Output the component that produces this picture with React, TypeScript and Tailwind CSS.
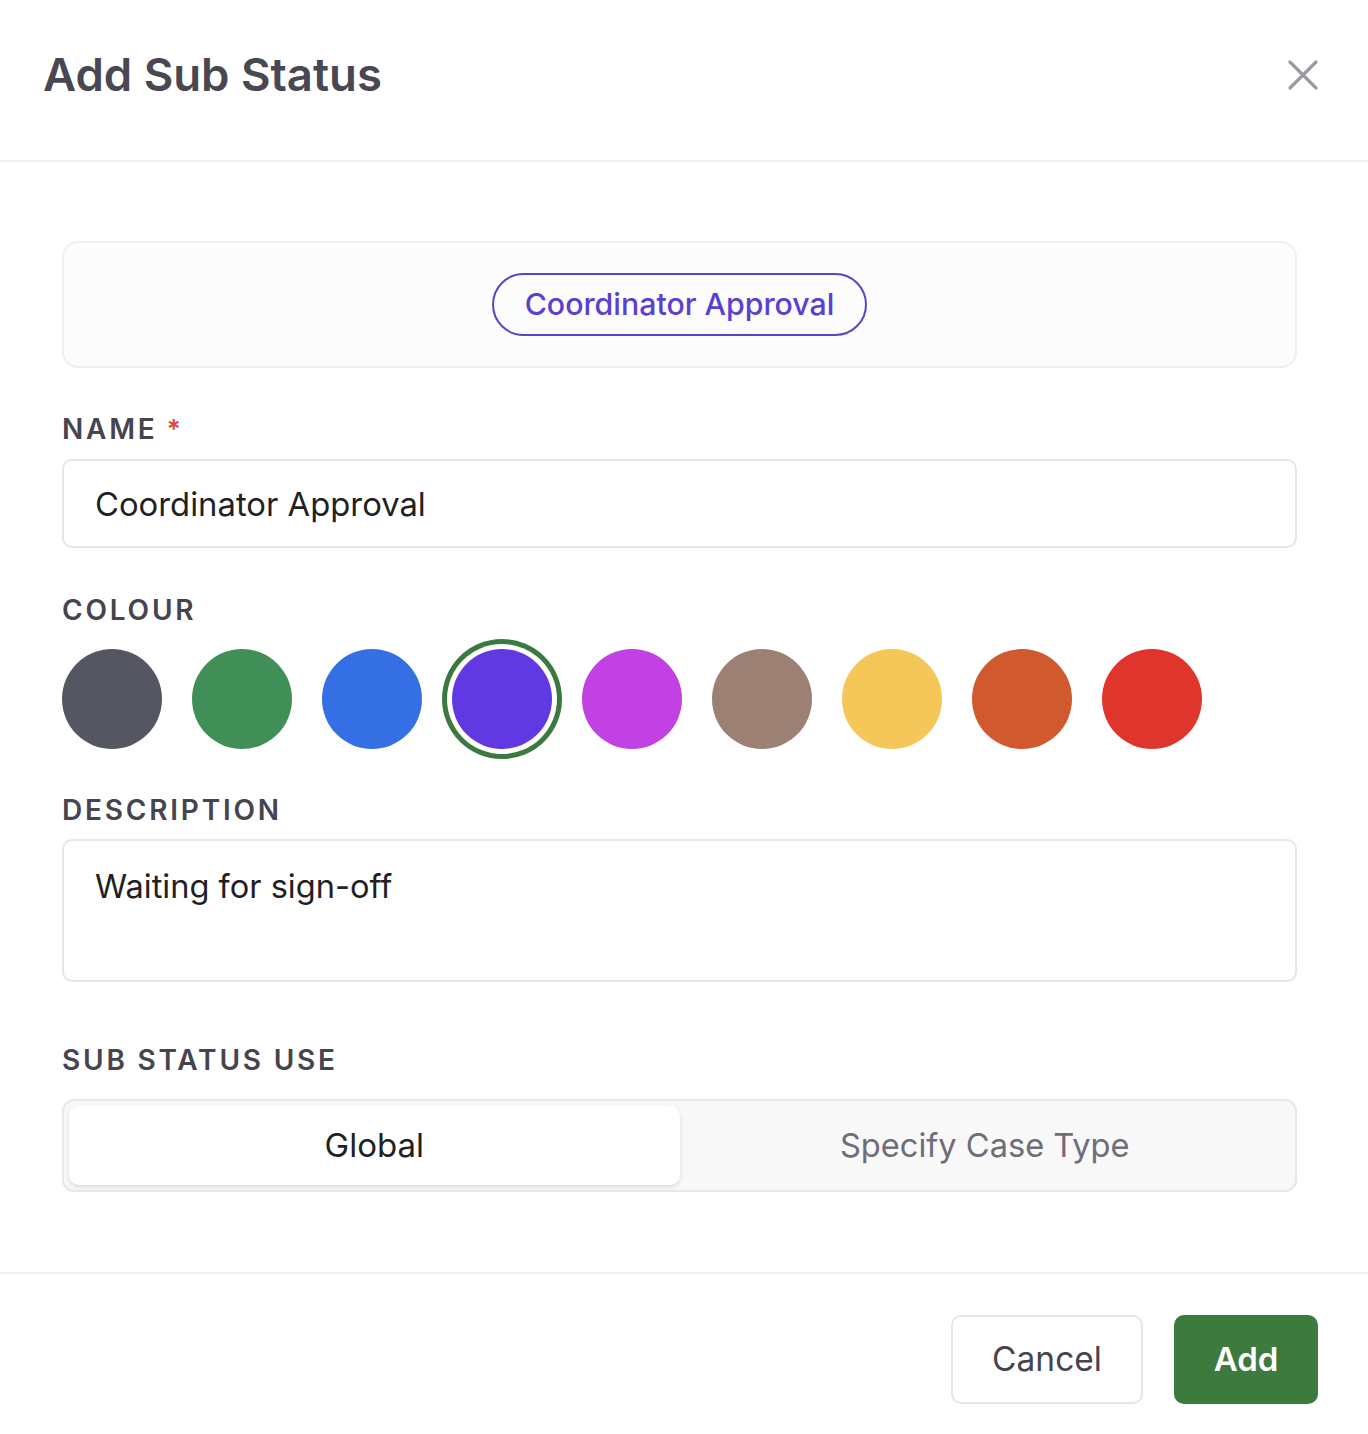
import { useState } from "react";

const COLOURS = [
    "#545761",
    "#3f8f57",
    "#3470e4",
    "#6139e3",
    "#c241e3",
    "#9c8074",
    "#f4c758",
    "#d05a2e",
    "#df352d",
];

function FieldLabel({ children, required }: { children: React.ReactNode; required?: boolean }) {
    return (
        <div className="flex items-center gap-[9px] text-[28px] leading-[34px] font-semibold tracking-[0.1em] text-[#46454f]">
            {children}
            {required && <span className="text-[#e0463b] text-[26px] tracking-normal">*</span>}
        </div>
    );
}

export default function App() {
    const [colour, setColour] = useState(3);
    const [use, setUse] = useState<"global" | "case">("global");

    return (
        <div
            className="w-[1368px] min-h-[1434px] bg-white flex flex-col"
            style={{ fontFamily: "Inter, 'Noto Sans', sans-serif" }}
        >
            {/* Header */}
            <div className="h-[162px] pl-[43px] pr-[50px] pb-[10px] flex items-center justify-between border-b-2 border-[#f0f0f2]">
                <h1 className="text-[45.5px] leading-[52px] font-semibold text-[#484752]">Add Sub Status</h1>
                <button className="w-[30px] h-[30px] text-[#9a9aa3]">
                    <svg width="30" height="30" viewBox="0 0 30 30" fill="none" stroke="currentColor" strokeWidth="3.2" strokeLinecap="round">
                        <path d="M2 2 L28 28" />
                        <path d="M28 2 L2 28" />
                    </svg>
                </button>
            </div>

            {/* Body */}
            <div className="pl-[62px] pr-[71px] pt-[79px] pb-[80px] flex flex-col">
                {/* Preview */}
                <div className="h-[127px] rounded-[16px] border-2 border-[#efeff1] bg-[#fcfcfd] flex items-center justify-center">
                    <span className="h-[63px] px-[31px] rounded-full border-2 border-[#5b42c8] flex items-center text-[30.3px] font-medium text-[#5a3fd0]">
                        Coordinator Approval
                    </span>
                </div>

                {/* Name */}
                <div className="mt-[44px]">
                    <FieldLabel required>NAME</FieldLabel>
                </div>
                <input
                    readOnly
                    value="Coordinator Approval"
                    className="mt-[13px] h-[89px] w-full rounded-[10px] border-2 border-[#e6e6e9] px-[31px] text-[32.8px] text-[#1f1f24] outline-none"
                />

                {/* Colour */}
                <div className="mt-[45px]">
                    <FieldLabel>COLOUR</FieldLabel>
                </div>
                <div className="mt-[22px] flex gap-[30px]">
                    {COLOURS.map((c, i) => (
                        <button
                            key={c}
                            onClick={() => setColour(i)}
                            className={
                                i === colour
                                    ? "w-[100px] h-[100px] rounded-full ring-[5px] ring-[#3b7a3f] ring-offset-[5px] ring-offset-white"
                                    : "w-[100px] h-[100px] rounded-full"
                            }
                            style={{ backgroundColor: c }}
                        />
                    ))}
                </div>

                {/* Description */}
                <div className="mt-[44px]">
                    <FieldLabel>DESCRIPTION</FieldLabel>
                </div>
                <textarea
                    readOnly
                    value="Waiting for sign-off"
                    className="mt-[12px] h-[143px] w-full resize-none rounded-[10px] border-2 border-[#e6e6e9] px-[31px] pt-[25px] text-[32.6px] leading-[40px] text-[#1f1f24] outline-none"
                />

                {/* Sub status use */}
                <div className="mt-[61px]">
                    <FieldLabel>SUB STATUS USE</FieldLabel>
                </div>
                <div className="mt-[22px] h-[93px] rounded-[12px] border-2 border-[#e7e7ea] bg-[#f8f8f9] p-[5px] grid grid-cols-2">
                    <button
                        onClick={() => setUse("global")}
                        className={
                            use === "global"
                                ? "rounded-[10px] bg-white shadow-[0_2px_4px_rgba(0,0,0,0.12)] text-[33px] text-[#1f1f24]"
                                : "rounded-[10px] text-[32.6px] text-[#6e6d78]"
                        }
                    >
                        Global
                    </button>
                    <button
                        onClick={() => setUse("case")}
                        className={
                            use === "case"
                                ? "rounded-[10px] bg-white shadow-[0_2px_4px_rgba(0,0,0,0.12)] text-[33px] text-[#1f1f24]"
                                : "rounded-[10px] text-[32.6px] text-[#6e6d78]"
                        }
                    >
                        Specify Case Type
                    </button>
                </div>
            </div>

            {/* Footer */}
            <div className="border-t-2 border-[#f0f0f2] pt-[41px] pr-[50px] flex justify-end gap-[31px]">
                <button className="w-[192px] h-[89px] rounded-[10px] border-2 border-[#e6e6e9] bg-white text-[33.5px] text-[#45444f]">
                    Cancel
                </button>
                <button className="w-[144px] h-[89px] rounded-[10px] bg-[#3d7a3e] text-[33px] font-semibold text-white">
                    Add
                </button>
            </div>
        </div>
    );
}
